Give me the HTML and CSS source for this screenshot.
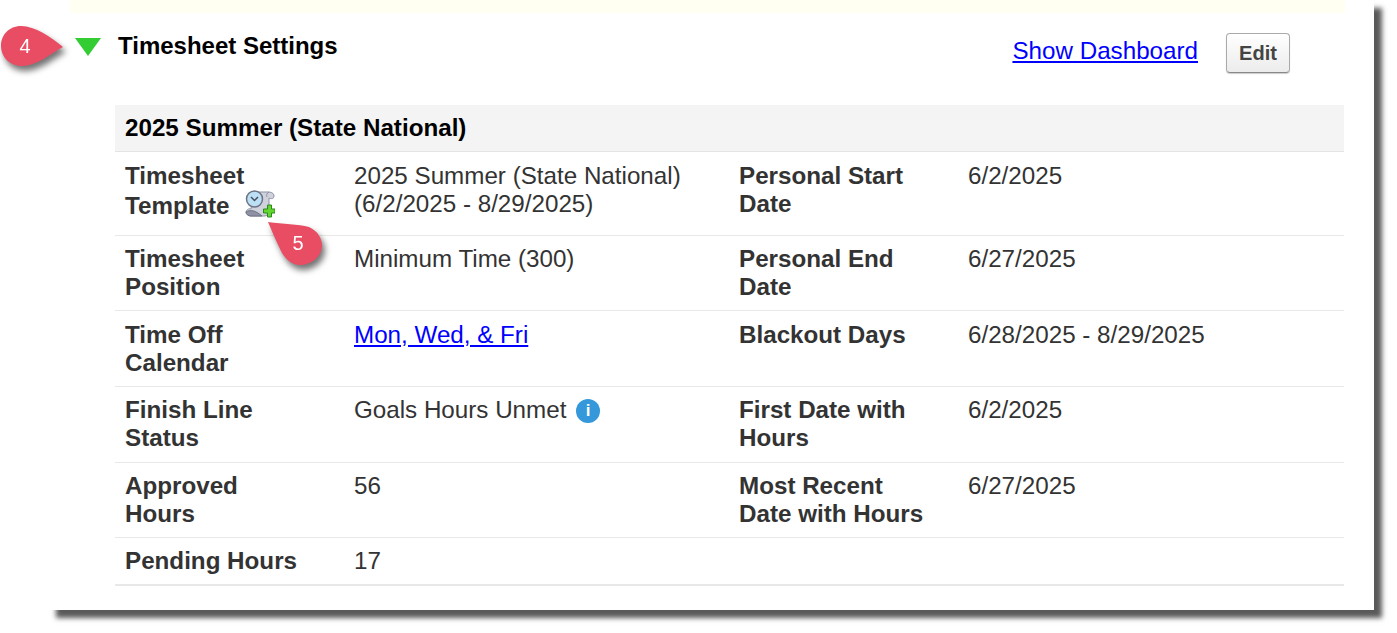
FILE: index.html
```html
<!DOCTYPE html>
<html lang="en">

<head>
    <meta charset="UTF-8">
    <meta name="viewport" content="width=device-width, initial-scale=1.0">
    <title>Timesheet Settings</title>
    <link rel="stylesheet" href="styles.css">
</head>

<body>

    <div class="sheet">
        <div class="panel">
            <div class="notice"></div>

            <div class="head">
                <span class="toggle"></span>
                <h2 class="head__title">Timesheet Settings</h2>
                <a class="head__link" href="#">Show Dashboard</a>
                <button class="head__edit">Edit</button>
            </div>

            <table class="details">
                <colgroup>
                    <col class="col-label">
                    <col class="col-value">
                    <col class="col-label2">
                    <col>
                </colgroup>
                <thead>
                    <tr>
                        <th colspan="4">2025 Summer (State National)</th>
                    </tr>
                </thead>
                <tbody>
                    <tr class="row-template">
                        <th>Timesheet<span class="template-line">Template<svg class="scroll-icon" width="30" height="30" viewBox="0 0 30 30">
                                <path d="M9 2h14c3 0 6 1 6 4s-3 3-5 2v12c0 4-2 6-5 6H6c-3 0-5-2-5-4s3-4 5-3z" fill="#cfd1dc" stroke="#8d90a3"/>
                                <path d="M1 22c5-3 10-1 16 4l-11 0c-3 0-5-2-5-4z" fill="#8f92a4" stroke="#6f7384"/>
                                <path d="M24 2c-2 1-3 3-2 5" fill="none" stroke="#8d90a3"/>
                                <circle cx="9.500" cy="9" r="8" fill="#bcdff5" stroke="#6c7484" stroke-width="1.500"/>
                                <path d="M6 7l3.500 3.500 3.500-3.500" fill="none" stroke="#46505f" stroke-width="1.500"/>
                                <path d="M18.500 19h4v-4h4v4h3.500v4h-3.500v4h-4v-4h-4z" fill="#62d62f" stroke="#2b8a1c"/>
                            </svg></span></th>
                        <td>2025 Summer (State National)<br>(6/2/2025 - 8/29/2025)</td>
                        <th>Personal Start<br>Date</th>
                        <td>6/2/2025</td>
                    </tr>
                    <tr>
                        <th>Timesheet<br>Position</th>
                        <td>Minimum Time (300)</td>
                        <th>Personal End<br>Date</th>
                        <td>6/27/2025</td>
                    </tr>
                    <tr>
                        <th>Time Off<br>Calendar</th>
                        <td><a href="#">Mon, Wed, &amp; Fri</a></td>
                        <th>Blackout Days</th>
                        <td>6/28/2025 - 8/29/2025</td>
                    </tr>
                    <tr>
                        <th>Finish Line<br>Status</th>
                        <td>Goals Hours Unmet <span class="info">i</span></td>
                        <th>First Date with<br>Hours</th>
                        <td>6/2/2025</td>
                    </tr>
                    <tr>
                        <th>Approved<br>Hours</th>
                        <td>56</td>
                        <th>Most Recent<br>Date with Hours</th>
                        <td>6/27/2025</td>
                    </tr>
                    <tr>
                        <th>Pending Hours</th>
                        <td>17</td>
                        <th></th>
                        <td></td>
                    </tr>
                </tbody>
            </table>
        </div>

        <!-- callouts laid over the screenshot -->
        <svg class="marker marker--four" width="66" height="52" viewBox="0 0 66 52">
            <path d="M21 1C35 1 51 12 63 22 50 29 37 41 22 41 10 41 1 32 1 21S9 1 21 1z" fill="#e84d63"/>
            <text x="25" y="28" class="marker__num">4</text>
        </svg>
        <svg class="marker marker--five" width="62" height="62" viewBox="0 0 62 62">
            <path d="M0 3C15 5 30 5 41 8 50 12 54 20 54 26 54 38 43 46 32 46 24 46 17 40 13 32 8 22 4 12 0 3z" fill="#e84d63"/>
            <text x="30" y="31" class="marker__num">5</text>
        </svg>
    </div>

</body>

</html>
```

FILE: styles.css
```css
/* CSS Reset */
html {
    box-sizing: border-box;
    font-size: 16px;
}

*,
*:before,
*:after {
    box-sizing: inherit;
}

body,
h2 {
    margin: 0;
    padding: 0;
}

body {
    height: 633px;
    overflow: hidden;
    background: #fff;
    font-family: "Liberation Sans", Arial, sans-serif;
}

.sheet {
    position: relative;
    width: 1326px;
    height: 610px;
    margin-left: 48px;
    background: #fff;
    box-shadow: 8px 8px 5px rgba(0, 0, 0, .65);
}

.panel {
    width: 1275px;
    margin-left: 22px;
}

.notice {
    height: 13px;
    background: #fffff2;
}

.head {
    display: flex;
    align-items: flex-start;
    height: 92px;
}

.toggle {
    width: 0;
    height: 0;
    margin: 25px 0 0 5px;
    border-left: 13px solid transparent;
    border-right: 13px solid transparent;
    border-top: 18px solid #33cc33;
}

.head__title {
    margin: 20px 0 0 17px;
    font-size: 24px;
    line-height: 26px;
    font-weight: bold;
    color: #000;
}

.head__link {
    margin: 24px 0 0 auto;
    font-size: 24.2px;
    line-height: 28px;
    color: #00f;
}

.head__edit {
    width: 64px;
    height: 40px;
    margin: 20px 55px 0 28px;
    padding: 0;
    border: 1px solid #aaa;
    border-bottom-color: #888;
    border-radius: 4px;
    background: linear-gradient(#fff, #ececec);
    box-shadow: 0 1px 1px rgba(0, 0, 0, .2);
    font-family: inherit;
    font-size: 20px;
    font-weight: bold;
    color: #444;
}

.details {
    width: 1229px;
    margin-left: 45px;
    border-collapse: collapse;
    table-layout: fixed;
    font-size: 24.2px;
    line-height: 28px;
    color: #333;
}

.col-label {
    width: 239px;
}

.col-value {
    width: 375px;
}

.col-label2 {
    width: 239px;
}

.details thead th {
    height: 46px;
    padding: 0 10px;
    background: #f4f4f4;
    border-bottom: 1px solid #e4e4e4;
    text-align: left;
    color: #000;
}

.details tbody th,
.details tbody td {
    padding: 9px 0;
    vertical-align: top;
    text-align: left;
    border-bottom: 1px solid #e8e8e8;
}

.details tbody th {
    padding-left: 10px;
    font-weight: bold;
}

.details .row-template th,
.details .row-template td {
    height: 84px;
    padding-top: 10px;
    padding-bottom: 0;
}

.details tbody tr:nth-child(3) th,
.details tbody tr:nth-child(3) td {
    padding-top: 10px;
}

.details tbody tr:nth-child(4) th,
.details tbody tr:nth-child(4) td {
    padding-bottom: 10px;
}

.details tbody tr:last-child th,
.details tbody tr:last-child td {
    border-bottom-width: 2px;
}

.details a {
    color: #00f;
}

.template-line {
    display: flex;
    height: 28px;
    margin-top: 2px;
    white-space: nowrap;
}

.scroll-icon {
    flex: none;
    margin: -2px 0 0 16px;
}

.info {
    display: inline-block;
    width: 24px;
    height: 24px;
    margin-left: 3px;
    border-radius: 50%;
    background: #3498db;
    color: #fff;
    font-size: 17px;
    line-height: 24px;
    font-weight: bold;
    text-align: center;
    vertical-align: 2px;
}

.marker {
    position: absolute;
    overflow: visible;
    filter: drop-shadow(3px 5px 3px rgba(0, 0, 0, .55));
}

.marker--four {
    left: -48px;
    top: 25px;
}

.marker--five {
    left: 220px;
    top: 219px;
}

.marker__num {
    font-family: "Liberation Sans", Arial, sans-serif;
    font-size: 20px;
    fill: #fff;
    text-anchor: middle;
}
```
